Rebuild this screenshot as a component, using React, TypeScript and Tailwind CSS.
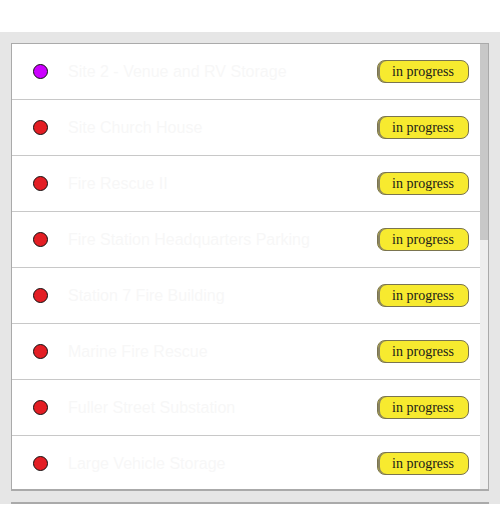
import React from "react";

const rows = [
  { name: "Site 2 - Venue and RV Storage", color: "#cc00ff" },
  { name: "Site Church House", color: "#e31e24" },
  { name: "Fire Rescue II", color: "#e31e24" },
  { name: "Fire Station Headquarters Parking", color: "#e31e24" },
  { name: "Station 7 Fire Building", color: "#e31e24" },
  { name: "Marine Fire Rescue", color: "#e31e24" },
  { name: "Fuller Street Substation", color: "#e31e24" },
  { name: "Large Vehicle Storage", color: "#e31e24" },
];

export default function App() {
  return (
    <div className="w-[500px] h-[532px] bg-white pt-8">
      <div className="h-[472px] overflow-hidden bg-[#e6e6e6] px-[11px] pt-[11px]">
        <div className="h-[448px] border border-[#aaaaaa] border-b-2 bg-white flex overflow-hidden">
          <div className="flex-1 flex flex-col">
            {rows.map((r, i) => (
              <div
                key={i}
                className="h-[56px] shrink-0 border-b border-[#c8c8c8] flex items-center pl-[21px] pr-[11px]"
              >
                <div
                  className="w-[15px] h-[15px] rounded-full border border-[#111] shrink-0"
                  style={{ backgroundColor: r.color }}
                />
                <div
                  className="ml-[20px] flex-1 text-[16px] text-[#f7f7f7] truncate"
                  style={{ fontFamily: '"Liberation Sans", Arial, sans-serif' }}
                >
                  {r.name}
                </div>
                <div
                  className="w-[92px] h-[23px] rounded-[8px] border border-[#7a7450] shadow-[inset_2px_0_0_#8a8460] bg-[#f7ea2f] flex items-center justify-center text-[14px] text-[#1a1a1a]"
                  style={{ fontFamily: '"Liberation Serif", serif' }}
                >
                  in progress
                </div>
              </div>
            ))}
          </div>
          <div className="w-[8px] bg-[#eeeeee] shrink-0">
            <div className="h-[196px] bg-[#c8c8c8]" />
          </div>
        </div>
        <div className="mt-[11px] h-[40px] border-t-2 border-x border-[#aaaaaa] bg-white" />
      </div>
    </div>
  );
}
